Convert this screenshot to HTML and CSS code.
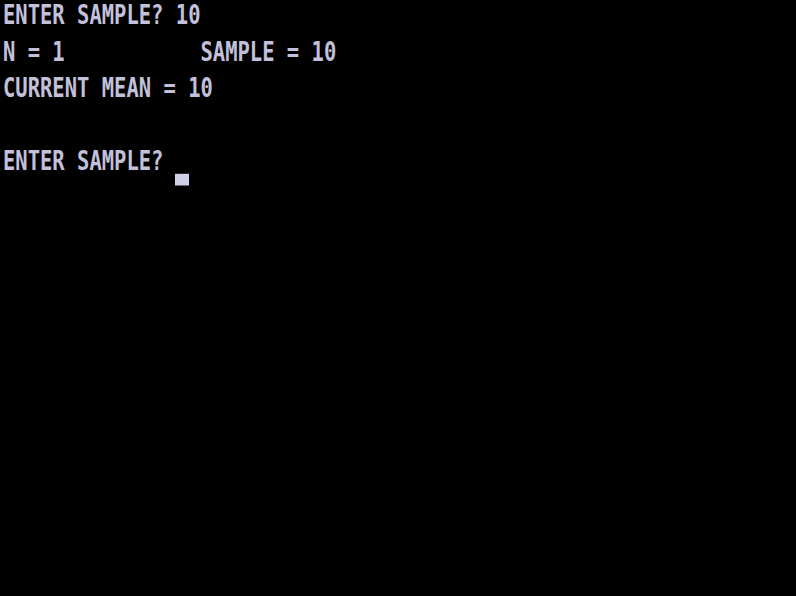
FILE: index.html
```html
<!DOCTYPE html>
<html>
<head>
<meta charset="utf-8">
<link rel="stylesheet" href="styles.css">
</head>
<body>
<div class="screen">
<pre class="term">ENTER SAMPLE? 10
N = 1           SAMPLE = 10
CURRENT MEAN = 10

ENTER SAMPLE? <span class="cursor"></span></pre>
</div>
</body>
</html>
```
FILE: styles.css
```css
html, body {
  margin: 0;
  padding: 0;
  background: #000;
  width: 796px;
  height: 596px;
  overflow: hidden;
}
.screen {
  width: 796px;
  height: 596px;
  background: #000;
  overflow: hidden;
}
.term {
  margin: -3px 0 0 0;
  padding: 0 0 0 3px;
  font-family: "DejaVu Sans Mono", monospace;
  font-size: 20.5px;
  line-height: 28px;
  color: #c2c0da;
  font-weight: bold;
  transform: scaleY(1.3);
  transform-origin: 0 0;
  white-space: pre;
}
.cursor {
  display: inline-block;
  width: 14px;
  height: 9px;
  margin-left: -1px;
  vertical-align: -12.3px;
  background: #d0d0e8;
}
```
